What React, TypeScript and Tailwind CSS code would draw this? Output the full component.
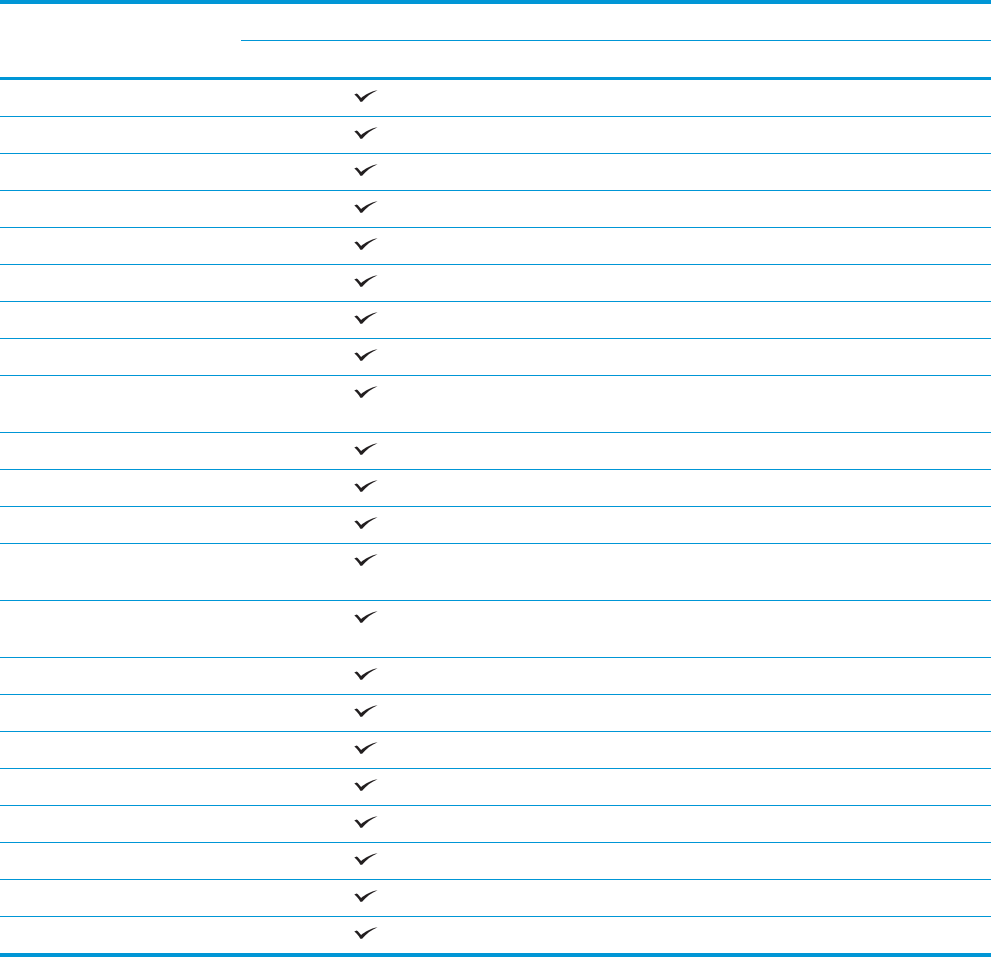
import React from "react";

// rows that hold two lines of text in the source table
const TALL = new Set([8, 12, 13]);
const ROW_COUNT = 22;

function Check() {
  return (
    <svg width="24" height="12" viewBox="0 0 24 12" className="block">
      <path
        d="M0.3 4.6 L2.7 3.5 C4.3 4.5 5.7 6.1 7.1 8.1 C11 4.6 16.2 1.6 23.6 0.2 C17.4 2.8 12.4 6.6 8.1 11.8 L6.3 11.8 C4.7 8.9 2.7 6.3 0.3 4.6 Z"
        fill="#231f20"
      />
    </svg>
  );
}

export default function App() {
  const rows = Array.from({ length: ROW_COUNT }, (_, i) => i);

  return (
    <div className="w-[991px] bg-white font-['Liberation_Sans',sans-serif] text-sm text-[#231f20]">
      {/* Header */}
      <div className="grid grid-cols-[241px_1fr] border-t-4 border-b-[3px] border-[#0096d6]">
        <div className="h-[73px]" />
        <div className="flex flex-col">
          <div className="h-[37px] border-b border-[#0096d6]" />
          <div className="h-9" />
        </div>
      </div>

      {/* Body */}
      {rows.map((i) => {
        const last = i === ROW_COUNT - 1;
        const tall = TALL.has(i);
        return (
          <div
            key={i}
            className={`grid grid-cols-[241px_250px_1fr] border-[#0096d6] ${
              last ? "h-[40px] border-b-4" : tall ? "h-[57px] border-b" : "h-[37px] border-b"
            }`}
          >
            <div />
            <div className="flex justify-center pt-[10px]">
              <Check />
            </div>
            <div />
          </div>
        );
      })}
    </div>
  );
}
